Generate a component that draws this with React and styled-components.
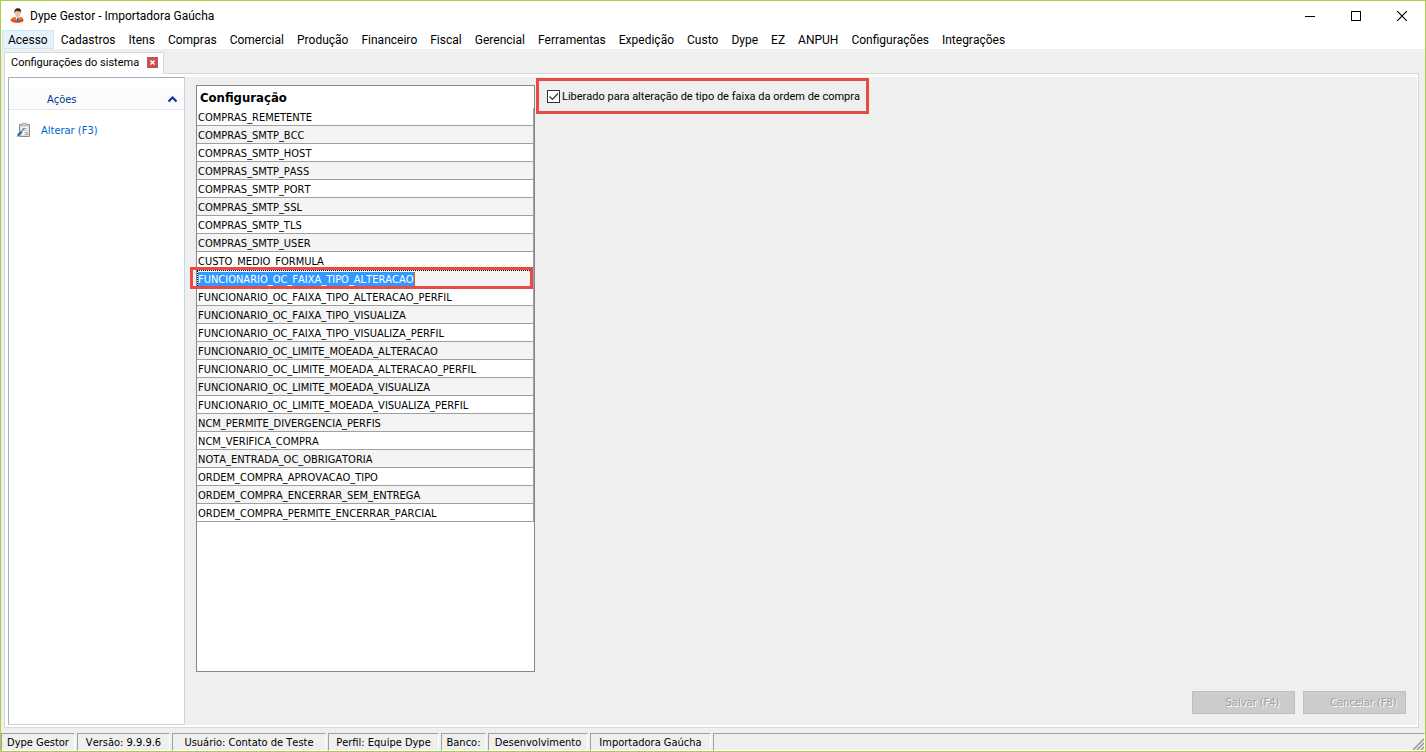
import React, { useState } from 'react';
import styled, { createGlobalStyle } from 'styled-components';

const GlobalStyle = createGlobalStyle`
  * {
    box-sizing: border-box;
  }

  body {
    margin: 0;
    font-family: 'DejaVu Sans Condensed', Tahoma, 'DejaVu Sans', sans-serif;
    font-size: 11px;
    font-kerning: none;
    color: #000000;
    background: #efefef;
  }

  button,
  input {
    font: inherit;
    font-kerning: none;
  }
`;

const Window = styled.div`
  display: flex;
  flex-direction: column;
  min-height: 100vh;
  border: 1px solid #a9cf46;
  background: #efefef;
`;

const TitleBar = styled.header`
  display: flex;
  align-items: center;
  height: 29px;
  padding-left: 8px;
  background: #ffffff;
`;

const Title = styled.h1`
  flex: 1;
  margin: 0 0 0 5px;
  font-family: Roboto, 'Segoe UI', sans-serif;
  font-size: 12px;
  font-weight: 400;
`;

const WindowButton = styled.button`
  display: flex;
  align-items: center;
  justify-content: center;
  width: 46px;
  height: 28px;
  padding: 0;
  border: none;
  background: none;
`;

const MenuBar = styled.nav`
  display: flex;
  gap: 1px;
  height: 19px;
  padding-left: 1px;
  background: #ffffff;
`;

const MenuItem = styled.button`
  height: 19px;
  padding: 1px 5px 0;
  border: 1px solid ${(p) => (p.$active ? '#cce8ff' : 'transparent')};
  background: ${(p) => (p.$active ? '#e5f3ff' : 'transparent')};
  color: #000000;
  font-family: Roboto, 'Segoe UI', sans-serif;
  font-size: 12px;
  line-height: 16px;
  white-space: nowrap;
`;

const TabStrip = styled.div`
  display: flex;
  height: 24px;
  padding: 3px 0 0 3px;
`;

const Tab = styled.div`
  position: relative;
  z-index: 1;
  display: flex;
  align-items: center;
  gap: 8px;
  height: 22px;
  padding: 0 5px 2px 6px;
  border: 1px solid #d9d9d9;
  border-bottom: none;
  background: #ffffff;
  font-family: Roboto, sans-serif;
`;

const CloseTab = styled.button`
  display: flex;
  align-items: center;
  justify-content: center;
  width: 11px;
  height: 11px;
  padding: 0;
  border: none;
  background: #c75050;
`;

const Page = styled.main`
  display: flex;
  flex: 1;
  margin: 0 6px 0 3px;
  padding: 3px 1px 2px 3px;
  border: 1px solid #d9d9d9;
  background: #ffffff;
`;

const Sidebar = styled.aside`
  width: 177px;
  padding-top: 10px;
  border: 1px solid #c5d6e4;
  border-left-color: #9db2c4;
  border-top-color: #9db2c4;
  background: #ffffff;
`;

const SidebarHeader = styled.button`
  display: flex;
  align-items: center;
  justify-content: space-between;
  width: 100%;
  height: 22px;
  padding: 1px 6px 0 38px;
  border: none;
  border-bottom: 1px solid #e3e6ea;
  background: #fbfbfb;
  color: #003399;
`;

const Action = styled.button`
  display: flex;
  align-items: center;
  gap: 9px;
  margin: 12px 0 0 7px;
  padding: 0;
  border: none;
  background: none;
  color: #0066cc;
`;

const Content = styled.section`
  display: flex;
  flex: 1;
  flex-direction: column;
  background: #efefef;
`;

const Columns = styled.div`
  display: flex;
  flex: 1;
  align-items: flex-start;
  gap: 1px;
`;

const Grid = styled.div`
  width: 339px;
  min-height: 587px;
  margin: 8px 0 0 11px;
  border: 1px solid #828790;
  background: #ffffff;
`;

const Table = styled.table`
  width: 100%;
  border-collapse: separate;
  border-spacing: 0;
`;

const HeadCell = styled.th`
  height: 22px;
  padding: 1px 3px 0;
  font-size: 13px;
  line-height: 18px;
  text-align: left;
`;

const Cell = styled.td`
  position: relative;
  z-index: ${(p) => (p.$selected ? 1 : 0)};
  height: 18px;
  padding: 2px 1px 0;
  border-right: 1px solid #a0a0a0;
  border-bottom: 1px solid #a0a0a0;
  background: ${(p) => (p.$odd ? '#f4f4f4' : '#ffffff')};
  line-height: 15px;
  white-space: nowrap;
`;

const Selected = styled.span`
  display: inline-block;
  height: 15px;
  border-right: 1px solid #cc6600;
  background: #3399ff;
  color: #ffffff;
  vertical-align: top;
`;

const RowMarker = styled.span`
  position: absolute;
  inset: -3px 0 -2px -7px;
  border: 3px solid #ea4a46;
  pointer-events: none;

  &::before {
    content: '';
    position: absolute;
    inset: 0 0 0 4px;
    border-top: 1px dotted #000000;
    border-left: 1px dotted #000000;
  }
`;

const Option = styled.label`
  display: flex;
  align-items: center;
  gap: 2px;
  height: 36px;
  margin-top: 1px;
  padding: 0 6px 0 8px;
  border: 3px solid #ea4a46;
  font-family: Roboto, sans-serif;
  white-space: nowrap;
`;

const CheckWrap = styled.span`
  position: relative;
  width: 13px;
  height: 13px;

  svg {
    position: absolute;
    inset: 0;
    pointer-events: none;
  }
`;

const Checkbox = styled.input`
  display: block;
  appearance: none;
  width: 13px;
  height: 13px;
  margin: 0;
  border: 1px solid #333333;
  background: #ffffff;
`;

const Footer = styled.div`
  display: flex;
  justify-content: flex-end;
  gap: 8px;
  padding: 0 11px 11px;
`;

const FormButton = styled.button`
  width: 103px;
  height: 23px;
  padding: 0 0 0 18px;
  border: 1px solid #bfbfbf;
  background: #cccccc;
  color: #a0a0a0;
  text-shadow: 1px 1px 0 #ffffff;
  white-space: nowrap;
`;

const StatusBar = styled.footer`
  display: flex;
  gap: 2px;
  height: 23px;
  padding-top: 5px;
`;

const StatusPanel = styled.div`
  flex: ${(p) => (p.$width ? `0 0 ${p.$width}px` : '1')};
  height: 18px;
  border: 1px solid #a0a0a0;
  border-right-color: #ffffff;
  border-bottom-color: #ffffff;
  line-height: 17px;
  text-align: center;
  white-space: nowrap;
`;

const Grip = styled.div`
  display: flex;
  justify-content: flex-end;
  align-items: flex-end;
  height: 100%;
`;

const menus = [
  'Acesso',
  'Cadastros',
  'Itens',
  'Compras',
  'Comercial',
  'Produção',
  'Financeiro',
  'Fiscal',
  'Gerencial',
  'Ferramentas',
  'Expedição',
  'Custo',
  'Dype',
  'EZ',
  'ANPUH',
  'Configurações',
  'Integrações',
];

const settings = [
  'COMPRAS_REMETENTE',
  'COMPRAS_SMTP_BCC',
  'COMPRAS_SMTP_HOST',
  'COMPRAS_SMTP_PASS',
  'COMPRAS_SMTP_PORT',
  'COMPRAS_SMTP_SSL',
  'COMPRAS_SMTP_TLS',
  'COMPRAS_SMTP_USER',
  'CUSTO_MEDIO_FORMULA',
  'FUNCIONARIO_OC_FAIXA_TIPO_ALTERACAO',
  'FUNCIONARIO_OC_FAIXA_TIPO_ALTERACAO_PERFIL',
  'FUNCIONARIO_OC_FAIXA_TIPO_VISUALIZA',
  'FUNCIONARIO_OC_FAIXA_TIPO_VISUALIZA_PERFIL',
  'FUNCIONARIO_OC_LIMITE_MOEADA_ALTERACAO',
  'FUNCIONARIO_OC_LIMITE_MOEADA_ALTERACAO_PERFIL',
  'FUNCIONARIO_OC_LIMITE_MOEADA_VISUALIZA',
  'FUNCIONARIO_OC_LIMITE_MOEADA_VISUALIZA_PERFIL',
  'NCM_PERMITE_DIVERGENCIA_PERFIS',
  'NCM_VERIFICA_COMPRA',
  'NOTA_ENTRADA_OC_OBRIGATORIA',
  'ORDEM_COMPRA_APROVACAO_TIPO',
  'ORDEM_COMPRA_ENCERRAR_SEM_ENTREGA',
  'ORDEM_COMPRA_PERMITE_ENCERRAR_PARCIAL',
];

const statusPanels = [
  { text: 'Dype Gestor', width: 74 },
  { text: 'Versão: 9.9.9.6', width: 93 },
  { text: 'Usuário: Contato de Teste', width: 154 },
  { text: 'Perfil: Equipe Dype', width: 111 },
  { text: 'Banco:', width: 45 },
  { text: 'Desenvolvimento', width: 100 },
  { text: 'Importadora Gaúcha', width: 121 },
];

const UserIcon = () => (
  <svg width="16" height="16" viewBox="0 0 16 16">
    <path d="M1.500 12.500C2 10 4 9.500 6 9h5c2.500.5 3.500 1.500 3.500 4-2 2.500-11 2.500-13-.5z" fill="#d9480f" />
    <path d="M2.500 11.500C4 9.500 5.500 9.300 6.500 9l2 4.500L11 9c1 .3 2 .8 2.600 2-1.600 2-9.600 2.300-11.100.5z" fill="#f0702c" />
    <path d="M6.300 8.500l2.300 5.500L11 8.500z" fill="#f4f6fa" />
    <path d="M8.300 9.800h1.200l.5 2.700-1.300 1.500-1-1.500z" fill="#2f62a8" />
    <path d="M6 4c0-3 5.500-3 5.500 0 .1 3-1 5.500-2.700 5.500S6 7 6 4z" fill="#f1bf95" />
    <path d="M5.700 5.500C4.900 2 6.500.3 9 .3s3.700 1.700 3 5.200l-.7-2.200C9.500 3.500 8 3.200 7 2.500z" fill="#33241c" />
  </svg>
);

const ClipboardIcon = () => (
  <svg width="16" height="16" viewBox="0 0 16 16">
    <path d="M3.500 2.500h10v12h-10z" fill="#d9dcde" stroke="#a08878" />
    <path d="M5 4h7v9H5z" fill="#f2f4f5" />
    <path d="M6 1.200h4.500l1 2.600H5z" fill="#cfd2d4" stroke="#8d8f91" strokeWidth=".6" />
    <path d="M6 6.500h5M8 8.500h3M8 10.500h3" stroke="#bcc3c8" />
    <path d="M8 13l4-3.500V13z" fill="#b4b9bd" />
    <path d="M.8 15l1-3.500L5 9l1.500 1.500-2.500 3z" fill="#2a79bd" />
    <path d="M5 10l3.500-4" stroke="#5f7f9a" strokeWidth="1.200" />
  </svg>
);

function App() {
  const [checked, setChecked] = useState(true);

  return (
    <>
      <GlobalStyle />
      <Window>
        <TitleBar>
          <UserIcon />
          <Title>Dype Gestor - Importadora Gaúcha</Title>
          <WindowButton aria-label="Minimizar">
            <svg width="10" height="10" shapeRendering="crispEdges">
              <path d="M0 5.500h10" stroke="#000" />
            </svg>
          </WindowButton>
          <WindowButton aria-label="Maximizar">
            <svg width="10" height="10" shapeRendering="crispEdges">
              <path d="M.5.5h9v9h-9z" fill="none" stroke="#000" />
            </svg>
          </WindowButton>
          <WindowButton aria-label="Fechar">
            <svg width="10" height="10">
              <path d="M0 0l10 10M10 0L0 10" stroke="#000" strokeWidth="1.200" />
            </svg>
          </WindowButton>
        </TitleBar>
        <MenuBar>
          {menus.map((name, i) => (
            <MenuItem key={name} $active={i === 0}>
              {name}
            </MenuItem>
          ))}
        </MenuBar>
        <TabStrip>
          <Tab>
            Configurações do sistema
            <CloseTab aria-label="Fechar aba">
              <svg width="5" height="5">
                <path d="M.5.5l4 4M4.500.5l-4 4" stroke="#fff" strokeWidth="1.400" />
              </svg>
            </CloseTab>
          </Tab>
        </TabStrip>
        <Page>
          <Sidebar>
            <SidebarHeader>
              Ações
              <svg width="11" height="8" viewBox="0 0 11 8">
                <path d="M1.500 6.500l4-4 4 4" fill="none" stroke="#003399" strokeWidth="2" />
              </svg>
            </SidebarHeader>
            <Action>
              <ClipboardIcon />
              Alterar (F3)
            </Action>
          </Sidebar>
          <Content>
            <Columns>
              <Grid>
                <Table>
                  <thead>
                    <tr>
                      <HeadCell scope="col">Configuração</HeadCell>
                    </tr>
                  </thead>
                  <tbody>
                    {settings.map((name, i) => (
                      <tr key={name}>
                        <Cell $odd={i % 2 === 1} $selected={i === 9}>
                          {i === 9 ? <Selected>{name}</Selected> : name}
                          {i === 9 && <RowMarker />}
                        </Cell>
                      </tr>
                    ))}
                  </tbody>
                </Table>
              </Grid>
              <Option>
                <CheckWrap>
                  <Checkbox
                    type="checkbox"
                    checked={checked}
                    onChange={(e) => setChecked(e.target.checked)}
                  />
                  {checked && (
                    <svg width="13" height="13">
                      <path d="M2.500 6.500l3 3 5.500-6" fill="none" stroke="#333" strokeWidth="1.200" />
                    </svg>
                  )}
                </CheckWrap>
                Liberado para alteração de tipo de faixa da ordem de compra
              </Option>
            </Columns>
            <Footer>
              <FormButton disabled>Salvar (F4)</FormButton>
              <FormButton disabled>Cancelar (F8)</FormButton>
            </Footer>
          </Content>
        </Page>
        <StatusBar>
          {statusPanels.map((panel) => (
            <StatusPanel key={panel.text} $width={panel.width}>
              {panel.text}
            </StatusPanel>
          ))}
          <StatusPanel>
            <Grip>
              <svg width="12" height="12">
                <path d="M1 12L12 1M5 12l7-7M9 12l3-3" stroke="#969696" strokeWidth="1.500" />
              </svg>
            </Grip>
          </StatusPanel>
        </StatusBar>
      </Window>
    </>
  );
}

export default App;
